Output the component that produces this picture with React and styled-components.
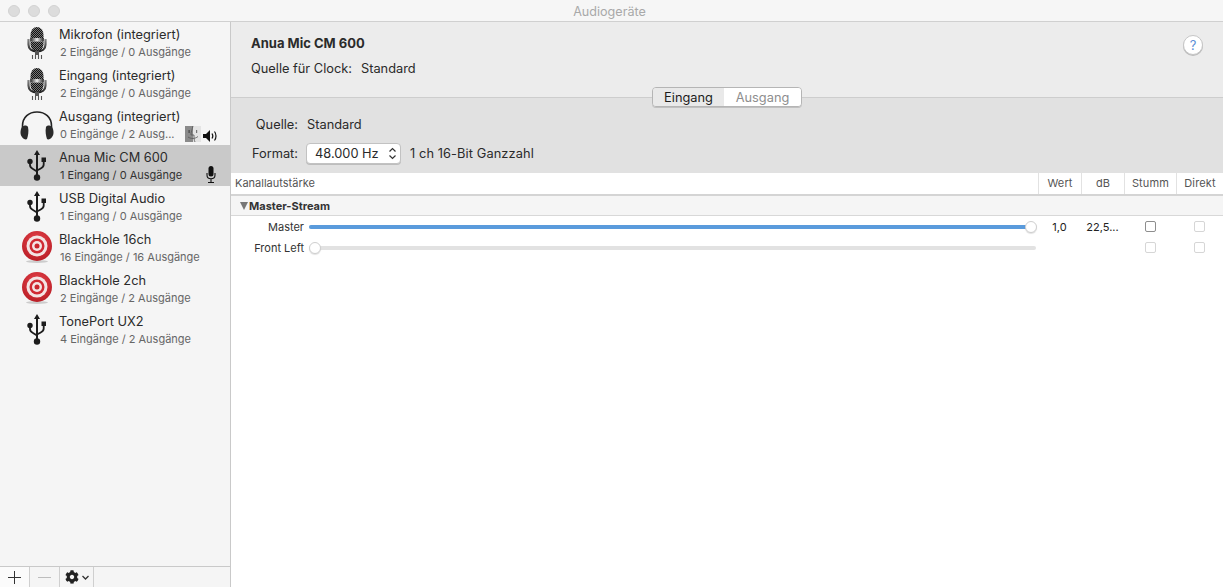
import React from "react";
import styled, { createGlobalStyle } from "styled-components";
import { FaCog } from "react-icons/fa";

const Global = createGlobalStyle`
  html, body { margin: 0; padding: 0; height: 100%; overflow: hidden; }
  body { font-family: Inter, "Noto Sans", "Liberation Sans", sans-serif; color: #2a2a2a; background: #fff; }
  #root { height: 100%; }
  * { box-sizing: border-box; }
`;

const Window = styled.div`
  width: 1223px; height: 587px; display: flex; flex-direction: column; background: #fff; overflow: hidden;
`;
const TitleBar = styled.div`
  height: 22px; flex: none; display: flex; align-items: center;
  background: #f6f6f6; border-bottom: 1px solid #d0d0d0; padding-left: 8px; gap: 8px;
`;
const Light = styled.span`
  width: 12px; height: 12px; border-radius: 50%; background: #dcdcdc; border: 1px solid #d2d2d2;
`;
const Title = styled.div`
  flex: 1; text-align: center; font-size: 12.6px; color: #a9a9a9; margin-left: -72px; padding-top: 1px;
`;
const Body = styled.div`flex: 1; display: flex; min-height: 0;`;
const Sidebar = styled.aside`
  width: 231px; flex: none; display: flex; flex-direction: column; background: #f5f5f5; border-right: 1px solid #c9c9c9;
`;
const DeviceList = styled.div`flex: 1;`;
const Row = styled.div`
  height: 41px; display: flex; align-items: stretch; padding-left: 19px;
  background: ${p => (p.$selected ? "#c9c9c9" : "transparent")};
`;
const IconBox = styled.div`
  width: 35px; flex: none; display: flex; align-items: center; justify-content: center; margin-right: 5px;
`;
const RowText = styled.div`
  flex: 1; min-width: 0; display: flex; flex-direction: column; padding-top: 5px;
`;
const Name = styled.div`font-size: 12.8px; line-height: 16px; color: #2b2b2b; white-space: nowrap;`;
const Sub = styled.div`
  font-size: 11px; line-height: 14px; margin-top: 2px; margin-left: 1px; white-space: nowrap;
  color: ${p => (p.$selected ? "#333" : "#666")};
`;
const Status = styled.div`
  flex: none; display: flex; align-items: flex-end; gap: 2px; padding: 0 ${p => p.$pr}px 3px 0;
`;
const BottomBar = styled.div`
  height: 21px; flex: none; display: flex; background: #f5f5f5; border-top: 1px solid #c9c9c9;
`;
const BarButton = styled.div`
  width: ${p => p.$w}px; display: flex; align-items: center; justify-content: center; gap: 3px;
  background: ${p => (p.$first ? "#fbfbfb" : "#f5f5f5")}; border-right: 1px solid #cfcfcf;
`;
const Main = styled.main`flex: 1; min-width: 0; display: flex; flex-direction: column;`;
const TopPanel = styled.section`
  height: 76px; flex: none; background: #ececec; border-bottom: 1px solid #cdcdcd;
  padding: 13px 20px 0 20px; display: flex; justify-content: space-between; align-items: flex-start;
`;
const DeviceTitle = styled.div`font-size: 13px; font-weight: 700; line-height: 16px; color: #2b2b2b;`;
const ClockLine = styled.div`display: flex; gap: 9px; font-size: 12.8px; line-height: 16px; margin-top: 10px;`;
const Help = styled.div`
  width: 20px; height: 20px; border-radius: 50%; background: #fff; border: 1px solid #c6c6c6;
  color: #5c8fd6; font-size: 13px; display: flex; align-items: center; justify-content: center;
  box-shadow: 0 1px 0 #bbb;
`;
const TabPanel = styled.section`
  height: 75px; flex: none; background: #e1e1e1; display: flex; flex-direction: column;
`;
const Tabs = styled.div`
  align-self: center; display: flex; height: 20px; margin-top: -11px; border-radius: 4px; overflow: hidden;
  border: 1px solid #b5b5b5; position: relative; box-shadow: 0 1px 0 #c0c0c0; margin-right: 1px;
`;
const Tab = styled.div`
  width: ${p => p.$w}px; font-size: 12.8px; display: flex; align-items: center; justify-content: center;
  padding-left: 1px;
  background: ${p => (p.$active ? "#e9e9e9" : "#fff")}; color: ${p => (p.$active ? "#1c1c1c" : "#8e8e8e")};
`;
const Line = styled.div`
  display: flex; align-items: center; height: 22px; font-size: 12.8px; margin-top: ${p => p.$mt}px;
`;
const Label = styled.div`width: 67px; text-align: right; margin-right: 9px;`;
const Select = styled.div`
  width: 95px; height: 21px; background: #fff; border: 1px solid #c2c2c2; border-radius: 4px; box-shadow: 0 1px 0 #bdbdbd;
  display: flex; align-items: center; justify-content: space-between; padding: 0 3px 0 8px; margin-right: 9px; margin-left: -1px;
`;
const FormatText = styled.span`letter-spacing: 0.1px;`;
const Table = styled.section`flex: 1; display: flex; flex-direction: column; background: #fff;`;
const HeaderRow = styled.div`
  height: 23px; flex: none; display: grid; grid-template-columns: 1fr 43px 43px 52px 46px;
  border-bottom: 2px solid #d4d4d4; background: #fff;
`;
const HeaderCell = styled.div`
  font-size: 11px; color: #555; display: flex; align-items: center; padding-bottom: 1px; letter-spacing: ${p => (p.$left ? "0" : "0.15px")};
  justify-content: ${p => (p.$left ? "flex-start" : "center")}; padding-left: ${p => (p.$left ? "4px" : "0")};
  border-right: ${p => (p.$last ? "none" : "1px solid #e2e2e2")};
`;
const GroupRow = styled.div`
  height: 20px; flex: none; display: flex; align-items: center; background: #f5f5f5; border-bottom: 1px solid #d8d8d8;
  padding-left: 9px; font-size: 11px; font-weight: 700; color: #333; gap: 1px;
`;
const Triangle = styled.span`
  width: 0; height: 0; border-left: 4.5px solid transparent; border-right: 4.5px solid transparent; border-top: 8px solid #777;
`;
const ChannelRow = styled.div`
  height: 21px; flex: none; display: grid; grid-template-columns: 78px 1fr 43px 43px 52px 47px; align-items: center;
  font-size: 11px; color: #333;
`;
const ChannelName = styled.div`text-align: right; padding-right: 5px;`;
const Track = styled.div`position: relative; height: 4px; background: #e2e2e2; border-radius: 2px; margin-right: 2px;`;
const Fill = styled.div`height: 100%; background: #5a9bdc; border-radius: 2px;`;
const Thumb = styled.div`
  position: absolute; top: -4px; width: 12px; height: 12px; border-radius: 50%; background: #fff;
  border: 1px solid #cfcfcf; box-shadow: 0 1px 1px rgba(0,0,0,.12);
`;
const Value = styled.div`text-align: center; color: #222;`;
const CheckCell = styled.div`display: flex; justify-content: center;`;
const Check = styled.span`
  width: 11px; height: 11px; border-radius: 2px; background: #fff; border: 1px solid ${p => (p.$dim ? "#d6d6d6" : "#8e8e8e")};
`;

const MicIcon = ({ id }) => (
  <svg width="20" height="33" viewBox="0 0 20 33">
    <defs>
      <pattern id={id} width="2" height="2" patternUnits="userSpaceOnUse">
        <rect width="2" height="2" fill="#777" />
        <rect width="1" height="1" fill="#111" />
        <rect x="1" y="1" width="1" height="1" fill="#111" />
      </pattern>
      <linearGradient id={id + "g"} x1="0" x2="1">
        <stop offset="0" stopColor="#222" /><stop offset=".5" stopColor="#eee" /><stop offset="1" stopColor="#222" />
      </linearGradient>
      <linearGradient id={id + "h"} x1="0" x2="0" y1="0" y2="1">
        <stop offset="0" stopColor="#888" /><stop offset="1" stopColor="#222" />
      </linearGradient>
    </defs>
    <path d="M3.500 9a6.500 8 0 0 1 13 0v4h-13z" fill={`url(#${id})`} />
    <rect x="3.200" y="12" width="13.600" height="3.500" fill={`url(#${id}g)`} />
    <path d="M3.500 15.500h13v3a6.500 7 0 0 1-13 0z" fill={`url(#${id})`} />
    <path d="M1.500 13v5.500c0 4.500 3.500 7 8.500 7s8.500-2.500 8.500-7V13" fill="none" stroke={`url(#${id}h)`} strokeWidth="2.200" />
    <rect x="8" y="25" width="4" height="4" fill="#555" />
    <path d="M5.500 33v-4M8.500 33v-4M11.500 33v-4M14.500 33v-4" stroke="#555" strokeWidth="1.100" />
  </svg>
);
const UsbIcon = () => (
  <svg width="20" height="32" viewBox="0 0 20 32" fill="#1c1c1c">
    <path d="M10 0l3 5h-2v20H9V5H7z" />
    <circle cx="10" cy="27.500" r="3.200" />
    <circle cx="3" cy="11.500" r="2.700" />
    <rect x="14.500" y="7.500" width="4.500" height="4.500" />
    <path d="M3 12v3c0 2 1 3 3 4l4 2.500M16.700 12v2.500c0 2-1 3-3 4l-3.700 2" fill="none" stroke="#1c1c1c" strokeWidth="1.800" />
  </svg>
);
const Headphones = () => (
  <svg width="34" height="30" viewBox="0 0 34 30">
    <path d="M2.500 22V16C2.500 7 9 2 17 2s14.500 5 14.500 14v6" fill="none" stroke="#222" strokeWidth="1.600" />
    <path d="M2 17c-2 3-2 8 0 10 1 2 4 3 5 2 1-3 2-8 1-12-1-2-4-2-6 0z" fill="#2a2a2a" />
    <path d="M32 17c2 3 2 8 0 10-1 2-4 3-5 2-1-3-2-8-1-12 1-2 4-2 6 0z" fill="#2a2a2a" />
  </svg>
);
const Target = ({ id }) => (
  <svg width="32" height="33" viewBox="0 0 32 33">
    <defs>
      <radialGradient id={id} cx=".5" cy=".35" r=".7">
        <stop offset="0" stopColor="#e8434c" /><stop offset="1" stopColor="#b71c24" />
      </radialGradient>
    </defs>
    <ellipse cx="16" cy="30.500" rx="11" ry="1.500" fill="#ccc" />
    <circle cx="16" cy="15" r="15" fill={`url(#${id})`} />
    <circle cx="16" cy="15" r="10.500" fill="#f3e4e4" />
    <circle cx="16" cy="15" r="7.500" fill="#d02a33" />
    <circle cx="16" cy="15" r="5" fill="#f3e4e4" />
    <circle cx="16" cy="15" r="2.500" fill="#c9252e" />
  </svg>
);
const Finder = () => (
  <svg width="16" height="16" viewBox="0 0 16 16">
    <rect width="16" height="16" fill="#e4e4e4" />
    <rect width="8" height="16" fill="#8a8a8a" />
    <path d="M8 0c-1 4-2 6-2 9h3c0 3 0 5 1 7" fill="none" stroke="#555" strokeWidth=".8" />
    <path d="M3 11c3 2 7 2 10-.500" fill="none" stroke="#555" strokeWidth=".8" />
    <rect x="3.500" y="4" width="1.200" height="3" fill="#444" /><rect x="11" y="4" width="1.200" height="3" fill="#777" />
  </svg>
);
const Speaker = () => (
  <svg width="15" height="12" viewBox="0 0 15 12" fill="#111">
    <path d="M0 4h3l4-4v12L3 8H0z" />
    <path d="M9 3.500c1 1.500 1 3.500 0 5M11.500 1.500c2 2.500 2 6.500 0 9" fill="none" stroke="#111" strokeWidth="1.200" />
  </svg>
);
const SmallMic = () => (
  <svg width="10" height="17" viewBox="0 0 10 17" fill="#111">
    <rect x="2.500" y="0" width="5" height="10.500" rx="2.500" />
    <path d="M1 7v2c0 2.500 1.800 3.800 4 3.800S9 11.500 9 9V7M5 13v3M2 16.500h6" fill="none" stroke="#111" strokeWidth="1.100" />
  </svg>
);
const PlusMinus = ({ minus }) => (
  <svg width="13" height="13" viewBox="0 0 13 13" stroke={minus ? "#bdbdbd" : "#333"} strokeWidth="1">
    <path d="M0 6.500h13" />{!minus && <path d="M6.500 0v13" />}
  </svg>
);
const Stepper = () => (
  <svg width="9" height="13" viewBox="0 0 9 13" fill="none" stroke="#333" strokeWidth="1.200">
    <path d="M1.500 4.500 4.500 1.500l3 3M1.500 8.500l3 3 3-3" />
  </svg>
);
const Chevron = () => (
  <svg width="7" height="5" viewBox="0 0 7 5" fill="none" stroke="#333" strokeWidth="1.300"><path d="M.5 1l3 3 3-3" /></svg>
);

const devices = [
  { name: "Mikrofon (integriert)", sub: "2 Eingänge / 0 Ausgänge", icon: <MicIcon id="m1" /> },
  { name: "Eingang (integriert)", sub: "2 Eingänge / 0 Ausgänge", icon: <MicIcon id="m2" /> },
  { name: "Ausgang (integriert)", sub: "0 Eingänge / 2 Ausg...", icon: <Headphones />, status: <><Finder /><Speaker /></>, pr: 12 },
  { name: "Anua Mic CM 600", sub: "1 Eingang / 0 Ausgänge", icon: <UsbIcon />, selected: true, status: <SmallMic />, pr: 14 },
  { name: "USB Digital Audio", sub: "1 Eingang / 0 Ausgänge", icon: <UsbIcon /> },
  { name: "BlackHole 16ch", sub: "16 Eingänge / 16 Ausgänge", icon: <Target id="t1" /> },
  { name: "BlackHole 2ch", sub: "2 Eingänge / 2 Ausgänge", icon: <Target id="t2" /> },
  { name: "TonePort UX2", sub: "4 Eingänge / 2 Ausgänge", icon: <UsbIcon /> },
];

const Slider = ({ value }) => (
  <Track>
    <Fill style={{ width: `${value * 100}%` }} />
    <Thumb style={{ left: value === 1 ? "calc(100% - 11px)" : "0px" }} />
  </Track>
);

export default function App() {
  return (
    <Window>
      <Global />
      <TitleBar>
        <Light /><Light /><Light />
        <Title>Audiogeräte</Title>
      </TitleBar>
      <Body>
        <Sidebar>
          <DeviceList>
            {devices.map(d => (
              <Row key={d.name} $selected={d.selected}>
                <IconBox>{d.icon}</IconBox>
                <RowText>
                  <Name>{d.name}</Name>
                  <Sub $selected={d.selected}>{d.sub}</Sub>
                </RowText>
                {d.status && <Status $pr={d.pr}>{d.status}</Status>}
              </Row>
            ))}
          </DeviceList>
          <BottomBar>
            <BarButton $w={30} $first><PlusMinus /></BarButton>
            <BarButton $w={30}><PlusMinus minus /></BarButton>
            <BarButton $w={34}><FaCog size={14} color="#222" /><Chevron /></BarButton>
          </BottomBar>
        </Sidebar>
        <Main>
          <TopPanel>
            <div>
              <DeviceTitle>Anua Mic CM 600</DeviceTitle>
              <ClockLine><span>Quelle für Clock:</span><span>Standard</span></ClockLine>
            </div>
            <Help>?</Help>
          </TopPanel>
          <TabPanel>
            <Tabs>
              <Tab $active $w={71}>Eingang</Tab>
              <Tab $w={77}>Ausgang</Tab>
            </Tabs>
            <Line $mt={6}><Label>Quelle:</Label><span>Standard</span></Line>
            <Line $mt={7}>
              <Label>Format:</Label>
              <Select><span>48.000 Hz</span><Stepper /></Select>
              <FormatText>1 ch 16-Bit Ganzzahl</FormatText>
            </Line>
          </TabPanel>
          <Table>
            <HeaderRow>
              <HeaderCell $left>Kanallautstärke</HeaderCell>
              <HeaderCell>Wert</HeaderCell>
              <HeaderCell>dB</HeaderCell>
              <HeaderCell>Stumm</HeaderCell>
              <HeaderCell $last>Direkt</HeaderCell>
            </HeaderRow>
            <GroupRow><Triangle />Master-Stream</GroupRow>
            <ChannelRow>
              <ChannelName>Master</ChannelName>
              <Slider value={1} />
              <Value>1,0</Value>
              <Value>22,5...</Value>
              <CheckCell><Check /></CheckCell>
              <CheckCell><Check $dim /></CheckCell>
            </ChannelRow>
            <ChannelRow>
              <ChannelName>Front Left</ChannelName>
              <Slider value={0} />
              <Value />
              <Value />
              <CheckCell><Check $dim /></CheckCell>
              <CheckCell><Check $dim /></CheckCell>
            </ChannelRow>
          </Table>
        </Main>
      </Body>
    </Window>
  );
}
